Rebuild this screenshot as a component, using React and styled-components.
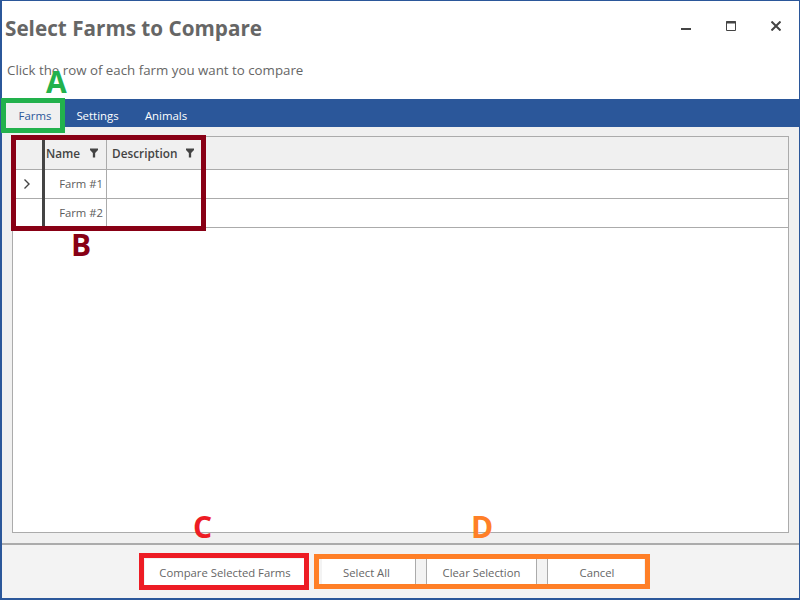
import React from "react";
import styled, { createGlobalStyle } from "styled-components";

const GlobalStyle = createGlobalStyle`
  html, body {
    margin: 0;
    padding: 0;
    background: #fff;
    font-family: "Open Sans", "Noto Sans", sans-serif;
  }
  * {
    box-sizing: border-box;
  }
`;

const Window = styled.div`
  position: relative;
  width: 800px;
  height: 600px;
  display: flex;
  flex-direction: column;
  overflow: hidden;
  background: #fff;
  border: 1px solid #2b579a;
  border-width: 1px 1px 2px 2px;
`;

const TitleBar = styled.div`
  height: 56px;
  display: flex;
  align-items: center;
  justify-content: space-between;
  padding: 0 18px 2px 3px;
  flex: none;
`;

const Title = styled.h1`
  margin: 0;
  font-size: 20.7px;
  font-weight: 700;
  color: #666;
`;

const WindowControls = styled.div`
  display: flex;
  align-items: center;
  gap: 35px;
  margin-bottom: 4px;
`;

const ControlIcon = styled.svg`
  display: block;
  width: 10px;
  height: 10px;
  fill: none;
  stroke: #444;
`;

const Instructions = styled.div`
  height: 42px;
  padding: 3px 0 0 5px;
  flex: none;
  font-size: 13.3px;
  line-height: 20px;
  color: #666;
`;

const TabBar = styled.div`
  height: 28px;
  flex: none;
  display: flex;
  padding-left: 4px;
  background: #2b579a;
`;

const Tab = styled.div`
  width: ${(props) => props.$width}px;
  display: flex;
  align-items: center;
  justify-content: center;
  padding-top: 4px;
  font-size: 11.4px;
  color: ${(props) => (props.$active ? "#2b579a" : "#fff")};
  background: ${(props) => (props.$active ? "#f0f0f0" : "transparent")};
`;

const Content = styled.div`
  flex: 1;
  min-height: 0;
  padding: 9px 10px 10px 10px;
  background: #f0f0f0;
  display: flex;
`;

const GridFrame = styled.div`
  flex: 1;
  border: 1px solid #ababab;
  background: #fff;
`;

const HeaderRow = styled.div`
  display: flex;
  height: 33px;
  background: #f0f0f0;
  border-bottom: 1px solid #ababab;
`;

const DataRow = styled.div`
  display: flex;
  height: 29px;
  border-bottom: 1px solid #ababab;
`;

const IndicatorCell = styled.div`
  position: relative;
  width: 32px;
  display: flex;
  align-items: center;
  justify-content: center;
  background: ${(props) => (props.$header ? "#f0f0f0" : "#fff")};
  flex: none;
  padding-right: 5px;

  &::after {
    content: "";
    position: absolute;
    top: 0;
    right: 0;
    bottom: -1px;
    width: 3px;
    background: #444;
  }
`;

const HeaderCell = styled.div`
  width: ${(props) => props.$width}px;
  flex: none;
  display: flex;
  align-items: center;
  justify-content: space-between;
  padding: 0 ${(props) => props.$right}px 0 ${(props) => props.$left}px;
  font-size: 11.8px;
  font-weight: 600;
  color: #444;
  border-right: ${(props) => (props.$last ? "0" : "1px solid #ababab")};
`;

const NameCell = styled.div`
  width: 62px;
  flex: none;
  display: flex;
  align-items: center;
  justify-content: flex-end;
  padding: 0 3px 1px 0;
  font-size: 11.3px;
  color: #5c5c5c;
  border-right: 1px solid #ababab;
`;

const FilterIcon = styled.svg`
  display: block;
  width: 8px;
  height: 10px;
  fill: #444;
`;

const ChevronIcon = styled.svg`
  display: block;
  width: 8px;
  height: 10px;
  fill: none;
  stroke: #444;
  stroke-width: 1.4;
`;

const Footer = styled.div`
  height: 55px;
  flex: none;
  display: flex;
  align-items: center;
  padding: 1px 0 0 143px;
  background: #f3f3f3;
  border-top: 2px solid #ababab;
`;

const Button = styled.div`
  width: ${(props) => props.$width}px;
  height: 26px;
  margin-left: ${(props) => props.$gap || 0}px;
  padding: 0 ${(props) => props.$padRight || 0}px 0 ${(props) => props.$padLeft || 0}px;
  display: flex;
  align-items: center;
  justify-content: center;
  flex: none;
  font-size: 11.3px;
  color: #666;
  background: #fff;
  border-right: ${(props) => (props.$edge ? "1px solid #ababab" : "0")};
  border-left: ${(props) => (props.$start ? "1px solid #ababab" : "0")};
`;

const Callout = styled.div`
  position: absolute;
  left: ${(props) => props.$x}px;
  top: ${(props) => props.$y}px;
  width: ${(props) => props.$w}px;
  height: ${(props) => props.$h}px;
  border: ${(props) => props.$thick}px solid ${(props) => props.$color};
`;

const CalloutLetter = styled.div`
  position: absolute;
  left: ${(props) => props.$x}px;
  top: ${(props) => props.$y}px;
  font-size: 30px;
  line-height: 32px;
  font-weight: 700;
  color: ${(props) => props.$color};
`;

const Filter = () => (
  <FilterIcon viewBox="0 0 9 10">
    <path d="M0 0h9v1.500L5.800 5v5H3.200V5L0 1.500z" />
  </FilterIcon>
);

const callouts = [
  { key: "A", color: "#22b14c", x: 1, y: 98, w: 64, h: 35, thick: 5, lx: 46, ly: 66 },
  { key: "B", color: "#880015", x: 11, y: 135, w: 195, h: 96, thick: 5, lx: 71, ly: 229 },
  { key: "C", color: "#ed1c24", x: 139, y: 553, w: 170, h: 37, thick: 5, lx: 193, ly: 511 },
  { key: "D", color: "#ff7f27", x: 314, y: 554, w: 336, h: 35, thick: 5, lx: 471, ly: 511 },
];

const App = () => {
  return (
    <>
      <GlobalStyle />
      <Window>
        <TitleBar>
          <Title>Select Farms to Compare</Title>
          <WindowControls>
            <ControlIcon viewBox="0 0 10 10">
              <path d="M0 8h10" strokeWidth="2" />
            </ControlIcon>
            <ControlIcon viewBox="0 0 10 10">
              <path d="M.5.5h9v9h-9z" />
              <path d="M0 1.500h10" strokeWidth="2" />
            </ControlIcon>
            <ControlIcon viewBox="0 0 10 10">
              <path d="M.5.5l9 9M9.500.5l-9 9" strokeWidth="2" />
            </ControlIcon>
          </WindowControls>
        </TitleBar>
        <Instructions>Click the row of each farm you want to compare</Instructions>
        <TabBar>
          <Tab $active $width={58}>Farms</Tab>
          <Tab $width={67}>Settings</Tab>
          <Tab $width={70}>Animals</Tab>
        </TabBar>
        <Content>
          <GridFrame>
            <HeaderRow>
              <IndicatorCell $header />
              <HeaderCell $width={62} $left={1} $right={8}>
                Name
                <Filter />
              </HeaderCell>
              <HeaderCell $width={93} $left={5} $right={6} $last>
                Description
                <Filter />
              </HeaderCell>
            </HeaderRow>
            <DataRow>
              <IndicatorCell>
                <ChevronIcon viewBox="0 0 8 10">
                  <path d="M1.500.5L6 5l-4.500 4.500" />
                </ChevronIcon>
              </IndicatorCell>
              <NameCell>Farm #1</NameCell>
            </DataRow>
            <DataRow>
              <IndicatorCell />
              <NameCell>Farm #2</NameCell>
            </DataRow>
          </GridFrame>
        </Content>
        <Footer>
          <Button $width={162} $padRight={2}>Compare Selected Farms</Button>
          <Button $width={94} $gap={15} $padRight={4} $edge>Select All</Button>
          <Button $width={111} $gap={10} $start $edge>Clear Selection</Button>
          <Button $width={97} $gap={10} $padLeft={2} $start>Cancel</Button>
        </Footer>
      </Window>
      {callouts.map((c) => (
        <React.Fragment key={c.key}>
          <Callout $x={c.x} $y={c.y} $w={c.w} $h={c.h} $thick={c.thick} $color={c.color} />
          <CalloutLetter $x={c.lx} $y={c.ly} $color={c.color}>{c.key}</CalloutLetter>
        </React.Fragment>
      ))}
    </>
  );
};

export default App;
